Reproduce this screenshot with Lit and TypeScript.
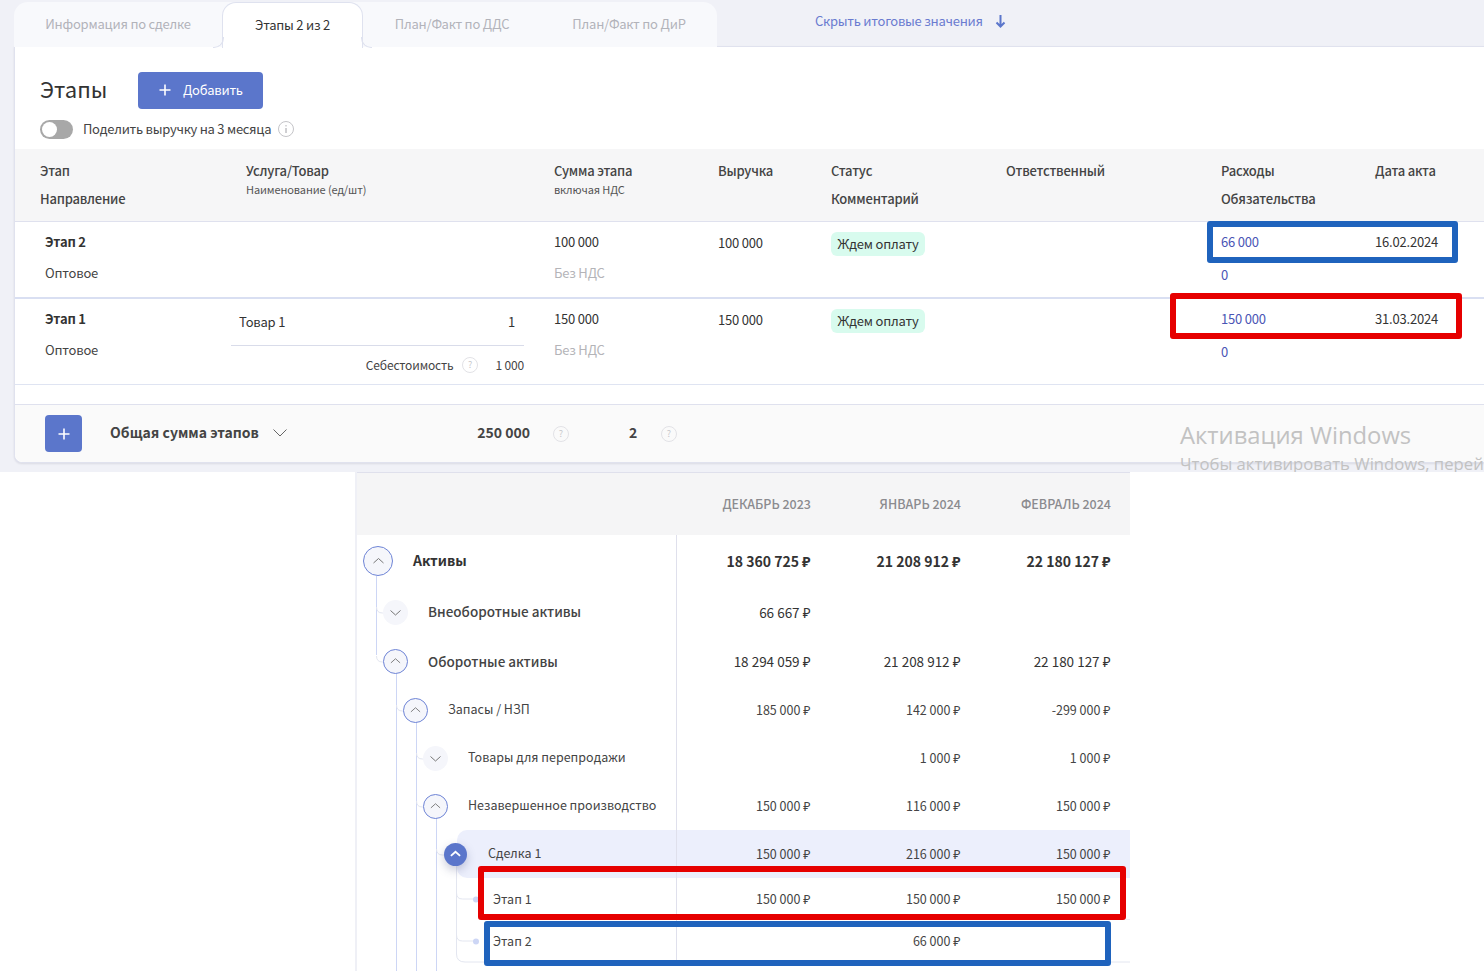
import { LitElement, html, css, svg } from "lit";
import { customElement } from "lit/decorators.js";

const chevUp = (w: number) => svg`<path d="M7.5 14 L12.5 9.5 L17.5 14" fill="none" stroke="currentColor" stroke-width=${w}/>`;
const chevDown = (w: number) => svg`<path d="M7.5 10.5 L12.5 15 L17.5 10.5" fill="none" stroke="currentColor" stroke-width=${w}/>`;

type TreeRow = {
  label: string; pad: number; h: number; kind: "open" | "closed" | "filled" | "dot";
  size?: number; tone: string; gap: number; vals: string[];
};

const rows: TreeRow[] = [
  { label: "Активы", pad: 6, h: 52, kind: "open", size: 30, tone: "t1", gap: 20, vals: ["18 360 725 ₽", "21 208 912 ₽", "22 180 127 ₽"] },
  { label: "Внеоборотные активы", pad: 26, h: 50, kind: "closed", tone: "t2", gap: 20, vals: ["66 667 ₽", "", ""] },
  { label: "Оборотные активы", pad: 26, h: 49, kind: "open", tone: "t2", gap: 20, vals: ["18 294 059 ₽", "21 208 912 ₽", "22 180 127 ₽"] },
  { label: "Запасы / НЗП", pad: 46, h: 48, kind: "open", tone: "t3", gap: 20, vals: ["185 000 ₽", "142 000 ₽", "-299 000 ₽"] },
  { label: "Товары для перепродажи", pad: 66, h: 48, kind: "closed", tone: "t3", gap: 20, vals: ["", "1 000 ₽", "1 000 ₽"] },
  { label: "Незавершенное производство", pad: 66, h: 48, kind: "open", tone: "t3", gap: 20, vals: ["150 000 ₽", "116 000 ₽", "150 000 ₽"] },
  { label: "Сделка 1", pad: 87, h: 48, kind: "filled", size: 23, tone: "t3", gap: 21, vals: ["150 000 ₽", "216 000 ₽", "150 000 ₽"] },
  { label: "Этап 1", pad: 136, h: 42, kind: "dot", tone: "t3", gap: 0, vals: ["150 000 ₽", "150 000 ₽", "150 000 ₽"] },
  { label: "Этап 2", pad: 136, h: 42, kind: "dot", tone: "t3", gap: 0, vals: ["", "66 000 ₽", ""] },
];

@customElement("app-root")
export class AppRoot extends LitElement {
  static styles = css`
    :host { display: block; width: 1484px; height: 971px; overflow: hidden; background: #fff; color: #333;
      font-family: "Noto Sans CJK SC", "Noto Sans", sans-serif; font-size: 13px; line-height: 20px; }
    * { box-sizing: border-box; }
    .nw { white-space: nowrap; }

    .top { position: relative; height: 472px; background: #f0f1f7; padding: 2px 0 0 14px; overflow: hidden; }
    .tabbar { display: flex; align-items: flex-start; height: 45px; position: relative; z-index: 1; }
    .tabs { display: flex; width: 703px; height: 45px; background: #f8f9fc; border-radius: 14px 14px 0 0; }
    .tab { display: flex; align-items: center; justify-content: center; color: #b2b3ba; font-size: 13px; letter-spacing: -.2px; padding-bottom: 2px; height: 45px; }
    .tab.a { width: 208px; } .tab.c { width: 178px; } .tab.d { width: 176px; }
    .tab.b { width: 141px; height: 46px; background: #fff; color: #333; position: relative; padding-top: 1px; letter-spacing: -.25px;
      border: 1px solid #dfe2ef; border-bottom: 0; border-radius: 14px 14px 0 0; }
    .tab.b::before, .tab.b::after { content: ""; position: absolute; bottom: 0; width: 10px; height: 10px; border-bottom: 1px solid #dfe2ef; }
    .tab.b::before { left: -10px; border-right: 1px solid #dfe2ef; border-bottom-right-radius: 10px; }
    .tab.b::after { right: -10px; border-left: 1px solid #dfe2ef; border-bottom-left-radius: 10px; }
    .hide { display: flex; align-items: center; gap: 12px; margin-left: 98px; height: 38px; color: #6a7bd0; font-size: 13px; letter-spacing: -.25px; }

    .card { position: relative; background: #fff; border: 1px solid #e0e2ee; border-right: 0; border-radius: 0 0 0 8px; height: 417px; margin-top: -1px;
      box-shadow: 0 1px 2px rgba(60,60,90,.12); display: flex; flex-direction: column; }
    .head { height: 102px; padding: 25px 0 0 25px; }
    .titleline { display: flex; align-items: center; height: 37px; }
    h2 { margin: 0; font-weight: 400; font-size: 22px; color: #333; width: 98px; line-height: 37px; padding-bottom: 4px; }
    .add { display: flex; align-items: center; gap: 12px; width: 125px; height: 37px; padding: 0 0 1px 21px; border-radius: 4px; background: #5b76cb; color: #fff; font-size: 13px; letter-spacing: -.25px; }
    .share { display: flex; align-items: center; height: 20px; margin-top: 10px; font-size: 13px; letter-spacing: -.25px; color: #444; }
    .toggle { width: 33px; height: 19px; border-radius: 10px; background: #a8a8a8; position: relative; margin-right: 10px; }
    .toggle::after { content: ""; position: absolute; left: 2px; top: 2px; width: 15px; height: 15px; border-radius: 50%; background: #fff; }
    .info { margin-left: 7px; display: block; }

    .grid { display: grid; grid-template-columns: 206px 308px 164px 113px 175px 215px 154px 1fr; padding-left: 25px; }
    .thead { height: 73px; background: #f6f6f7; border-bottom: 1px solid #dfe1ee; padding-top: 12px; color: #444; font-weight: 500; font-size: 13px; letter-spacing: -.2px; line-height: 20px; }
    .thead small { display: block; font-size: 11px; letter-spacing: -.12px; font-weight: 400; line-height: 16px; color: #555; }
    .thead .second { margin-top: 8px; }

    .row { height: 77px; padding-top: 10px; font-size: 13px; letter-spacing: -.2px; }
    .row.r1 { border-bottom: 2px solid #d9dff2; }
    .row.r2 { height: 86px; border-bottom: 1px solid #dfe4f2; }
    .stage { padding-left: 5px; }
    .stage b { display: block; font-weight: 700; color: #333; }
    .stage span { display: block; margin-top: 11px; color: #444; }
    .sum span { display: block; margin-top: 11px; color: #b4b4b8; }
    .rev { padding-top: 1px; }
    .pill { display: inline-flex; align-items: center; height: 24px; padding: 0 6.5px; background: #d8fbee; border-radius: 6px; font-size: 13px; }
    .link { color: #4a55b5; }
    .link span { display: block; margin-top: 13px; }
    .prodcell { margin: -10px 30px 0 -15px; }
    .prodline { display: flex; justify-content: space-between; align-items: center; height: 47px; padding: 0 9px 0 8px; border-bottom: 1px solid #d9dcea; }
    .cost { display: flex; justify-content: flex-end; align-items: center; height: 37px; font-size: 12px; letter-spacing: -.15px; color: #444; }
    .cost svg { margin: 0 17px 0 9px; }

    .spacer { height: 20px; border-bottom: 1px solid #dfe1ee; }
    .foot { flex: 1; background: #fafafa; border-radius: 0 0 0 8px; display: flex; align-items: center; padding: 0 0 0 30px; color: #444; }
    .plus { width: 37px; height: 37px; border-radius: 4px; background: #5b76cb; display: flex; align-items: center; justify-content: center; }
    .ftitle { margin-left: 28px; font-size: 14px; font-weight: 600; width: 163px; padding-bottom: 3px; }
    .fchev { margin-bottom: 2px; }
    .ftotal { width: 243px; text-align: right; font-size: 14px; font-weight: 700; padding-bottom: 3px; }
    .fq { display: flex; }
    .fq1 { margin-left: 23px; }
    .fcount { margin-left: 60px; width: 16px; font-size: 14px; font-weight: 700; padding-bottom: 3px; }
    .fq2 { margin-left: 16px; }

    .wm { position: absolute; left: 1180px; top: 418px; color: #c2c2c2; font-family: "Open Sans", sans-serif; white-space: nowrap; z-index: 2; }
    .wm div:first-child { font-size: 23.8px; line-height: 34px; }
    .wm div:last-child { font-size: 16.7px; line-height: 24px; }

    .panel { position: relative; width: 775px; height: 499px; margin-left: 355px; border-left: 2px solid #eff0f6; }
    .phead { display: grid; grid-template-columns: 320px 153px 150px 150px; height: 63px; background: #f5f5f6; border-top: 1px solid #dfe0ec; color: #8b8b8f; font-weight: 500; font-size: 12.5px; align-items: center; }
    .phead div { text-align: right; padding-right: 19px; }
    .prow { position: relative; display: grid; grid-template-columns: 320px 153px 150px 150px; align-items: center; color: #444; }
    .prow.band::before { content: ""; position: absolute; left: 100px; right: 0; top: 0; bottom: 0; background: #eceffc; border-radius: 10px 0 0 10px; }
    .lbl { position: relative; display: flex; align-items: center; height: 100%; border-right: 1px solid #dfe0ec; z-index: 2; }
    .txt { margin-bottom: 2px; }
    .t1 .txt { margin-bottom: 3px; }
    .dot .txt { margin-bottom: 0; }
    .bub { width: 25px; height: 25px; border-radius: 50%; background: #f5f6fb; color: #777; flex: none; display: flex; align-items: center; justify-content: center; }
    .bub.open { border: 1px solid #6e84d6; }
    .bub.filled { background: #5b76cb; color: #fff; box-shadow: 0 4px 10px rgba(60,70,120,.28); }
    .val { position: relative; text-align: right; padding-right: 19.5px; z-index: 2; white-space: nowrap; }
    .val.t1, .val.t2 { margin-bottom: 1px; }
    .t1 { font-size: 14px; font-weight: 700; color: #333; }
    .t2 { font-size: 13.5px; font-weight: 500; color: #444; }
    .t3 { font-size: 12.5px; color: #444; }
    .val.t2 { font-weight: 400; color: #333; }
    .tree { position: absolute; left: 0; top: 0; z-index: 1; pointer-events: none; }
    .frame { position: absolute; border: 6px solid; border-radius: 3px; z-index: 5; pointer-events: none; }
    .frame.blue { border-color: #1f63bd; }
    .frame.red { border-color: #e60000; }
    .f1 { left: 1207px; top: 221px; width: 251px; height: 42px; }
    .f2 { left: 1170px; top: 293px; width: 292px; height: 46px; }
    .f3 { left: 478px; top: 866px; width: 648px; height: 54px; }
    .f4 { left: 484px; top: 921px; width: 627px; height: 45px; }
  `;

  private q() {
    return html`<svg width="16" height="16" viewBox="0 0 16 16"><circle cx="8" cy="8" r="7.5" fill="none" stroke="#e2e2e6"/><text x="8" y="11" text-anchor="middle" font-size="9" fill="#c8c8cc">?</text></svg>`;
  }

  private bubble(r: TreeRow) {
    if (r.kind === "dot") return "";
    const s = r.size ?? 25;
    const w = r.kind === "filled" ? 2 : 1;
    const icon = r.kind === "closed" ? chevDown(w) : chevUp(w);
    return html`<div class="bub ${r.kind}" style="width:${s}px;height:${s}px;margin-right:${r.gap}px"><svg width="25" height="25" viewBox="0 0 25 25">${icon}</svg></div>`;
  }

  private treeLines() {
    const c = "#cdd6f5", g = "#e3e6f0";
    const branch = (x: number, y: number, to: number) => svg`<path d="M${x} ${y - 6} Q${x} ${y} ${x + 6} ${y} L${to} ${y}" fill="none" stroke=${g}/>`;
    const ox = 357, oy = 472;
    return svg`<svg class="tree" width="775" height="499" viewBox="${ox} ${oy} 775 499">
      <path d="M376.5 576 V655" fill="none" stroke=${c}/>
      ${branch(376.5, 613, 384)}${branch(376.5, 662, 384)}
      <path d="M396.5 674 V971" fill="none" stroke=${c}/>${branch(396.5, 711, 404)}
      <path d="M416.5 722 V971" fill="none" stroke=${c}/>${branch(416.5, 759, 424)}${branch(416.5, 807, 424)}
      <path d="M436.5 818 V971" fill="none" stroke=${c}/>${branch(436.5, 855, 445)}
      <path d="M456.5 866 V954 Q456.5 962 465 962 H1130" fill="none" stroke=${g}/>
      ${branch(456.5, 899, 476)}${branch(456.5, 941, 476)}
      <path d="M1126 919.5 H1130" stroke="#eceef4"/>
      <circle cx="476" cy="899.5" r="3" fill="#cdd6f5"/><circle cx="476" cy="941.5" r="3" fill="#cdd6f5"/>
    </svg>`;
  }

  render() {
    return html`
      <div class="top">
        <div class="tabbar">
          <div class="tabs nw">
            <div class="tab a">Информация по сделке</div>
            <div class="tab b">Этапы 2 из 2</div>
            <div class="tab c">План/Факт по ДДС</div>
            <div class="tab d">План/Факт по ДиР</div>
          </div>
          <div class="hide nw">Скрыть итоговые значения
            <svg width="11" height="14" viewBox="0 0 11 14"><path d="M5.5 1 V12.5 M1.5 8.5 L5.5 12.5 L9.5 8.5" fill="none" stroke="#5b76cb" stroke-width="2"/></svg>
          </div>
        </div>
        <div class="card nw">
          <div class="head">
            <div class="titleline"><h2>Этапы</h2>
              <div class="add"><svg width="12" height="12" viewBox="0 0 12 12"><path d="M6 0.5 V11.5 M0.5 6 H11.5" stroke="#fff" stroke-width="1.6"/></svg>Добавить</div>
            </div>
            <div class="share"><div class="toggle"></div>Поделить выручку на 3 месяца
              <svg class="info" width="16" height="16" viewBox="0 0 16 16"><circle cx="8" cy="8" r="7.5" fill="none" stroke="#c4c4c8"/><path d="M8 7 V12 M8 4.2 V5.4" stroke="#a0a0a6"/></svg>
            </div>
          </div>
          <div class="grid thead">
            <div>Этап<div class="second">Направление</div></div>
            <div>Услуга/Товар<small>Наименование (ед/шт)</small></div>
            <div>Сумма этапа<small>включая НДС</small></div>
            <div>Выручка</div>
            <div>Статус<div class="second">Комментарий</div></div>
            <div>Ответственный</div>
            <div>Расходы<div class="second">Обязательства</div></div>
            <div>Дата акта</div>
          </div>
          <div class="grid row r1">
            <div class="stage"><b>Этап 2</b><span>Оптовое</span></div>
            <div></div>
            <div class="sum">100 000<span>Без НДС</span></div>
            <div class="rev">100 000</div>
            <div><div class="pill">Ждем оплату</div></div>
            <div></div>
            <div class="link">66 000<span>0</span></div>
            <div>16.02.2024</div>
          </div>
          <div class="grid row r2">
            <div class="stage"><b>Этап 1</b><span>Оптовое</span></div>
            <div class="prodcell">
              <div class="prodline"><span>Товар 1</span><span>1</span></div>
              <div class="cost">Себестоимость ${this.q()}1 000</div>
            </div>
            <div class="sum">150 000<span>Без НДС</span></div>
            <div class="rev">150 000</div>
            <div><div class="pill">Ждем оплату</div></div>
            <div></div>
            <div class="link">150 000<span>0</span></div>
            <div>31.03.2024</div>
          </div>
          <div class="spacer"></div>
          <div class="foot">
            <div class="plus"><svg width="12" height="12" viewBox="0 0 12 12"><path d="M6 0.5 V11.5 M0.5 6 H11.5" stroke="#fff" stroke-width="1.6"/></svg></div>
            <div class="ftitle">Общая сумма этапов</div>
            <svg class="fchev" width="14" height="8" viewBox="0 0 14 8"><path d="M0.5 0.5 L7 7 L13.5 0.5" fill="none" stroke="#666"/></svg>
            <div class="ftotal">250 000</div>
            <span class="fq fq1">${this.q()}</span>
            <div class="fcount">2</div>
            <span class="fq fq2">${this.q()}</span>
          </div>
        </div>
        <div class="wm"><div>Активация Windows</div><div>Чтобы активировать Windows, перей</div></div>
      </div>
      <div class="panel nw">
        <div class="phead"><span></span><div>ДЕКАБРЬ 2023</div><div>ЯНВАРЬ 2024</div><div>ФЕВРАЛЬ 2024</div></div>
        ${this.treeLines()}
        ${rows.map((r) => html`
          <div class="prow ${r.kind === "filled" ? "band" : ""}" style="height:${r.h}px">
            <div class="lbl ${r.tone} ${r.kind === "dot" ? "dot" : ""}" style="padding-left:${r.pad}px">${this.bubble(r)}<span class="txt">${r.label}</span></div>
            ${r.vals.map((v) => html`<div class="val ${r.tone}">${v}</div>`)}
          </div>`)}
      </div>
      <div class="frame blue f1"></div>
      <div class="frame red f2"></div>
      <div class="frame red f3"></div>
      <div class="frame blue f4"></div>
    `;
  }
}
